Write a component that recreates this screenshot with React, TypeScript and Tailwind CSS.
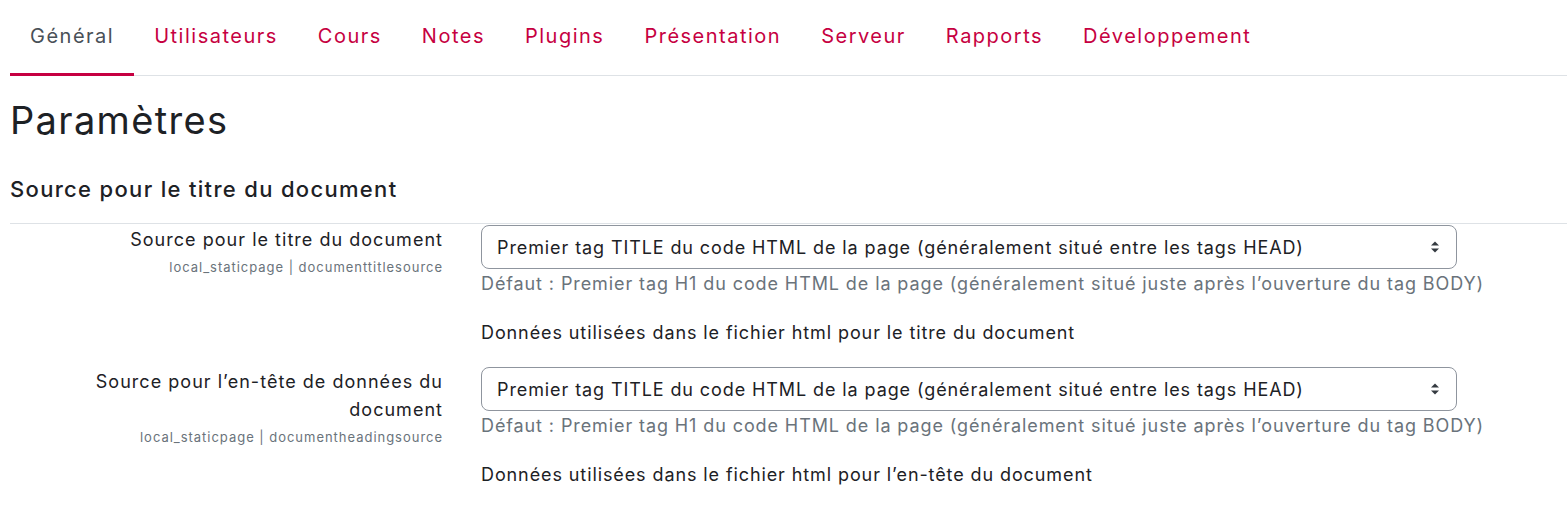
import React from "react";

const tabs = ["Général", "Utilisateurs", "Cours", "Notes", "Plugins", "Présentation", "Serveur", "Rapports", "Développement"];

function Arrow() {
  return (
    <svg width="10" height="14" viewBox="0 0 10 14" className="shrink-0">
      <path d="M5 1.5 L9 5.5 H1 Z" fill="#343a40" />
      <path d="M5 12.5 L9 8.5 H1 Z" fill="#343a40" />
    </svg>
  );
}

function Row({ label, sub, desc }: { label: React.ReactNode; sub: string; desc: string }) {
  return (
    <div className="flex h-[142px]">
      <div className="w-[433px] shrink-0 text-right">
        <div className="text-[18px] leading-[28px] tracking-[0.057em] text-[#1d2125] mt-[2px]">{label}</div>
        <div className="text-[13px] leading-[20px] tracking-[0.075em] text-[#6a737b] mt-[3px]">{sub}</div>
      </div>
      <div className="ml-[38px] w-[976px] pt-[1px]">
        <div className="h-[44px] rounded-[8px] border border-[#8f959e] flex items-center justify-between pl-[15px] pr-[16px] text-[18px] tracking-[0.05em] text-[#1d2125]">
          <span>Premier tag TITLE du code HTML de la page (généralement situé entre les tags HEAD)</span>
          <Arrow />
        </div>
        <div className="text-[18px] leading-[28px] tracking-[0.05em] text-[#6a737b] mt-[1px] whitespace-nowrap">
          Défaut : Premier tag H1 du code HTML de la page (généralement situé juste après l’ouverture du tag BODY)
        </div>
        <div className="text-[18px] leading-[28px] tracking-[0.05em] text-[#1d2125] mt-[21px]">{desc}</div>
      </div>
    </div>
  );
}

export default function App() {
  return (
    <div className="bg-white w-[1567px] h-[507px] overflow-hidden" style={{ fontFamily: "Inter, 'Liberation Sans', sans-serif" }}>
      <div className="pl-[10px]">
        <div className="flex h-[76px] border-b border-[#dee2e6]">
          {tabs.map((t, i) => (
            <div
              key={t}
              className={
                "px-[20px] h-[76px] flex items-center text-[20px] tracking-[0.075em] pb-[4px] " +
                (i === 0 ? "text-[#495057] border-b-[3px] border-[#c60041] mb-[-1px] pt-[3px]" : "text-[#c60041]")
              }
            >
              {t}
            </div>
          ))}
        </div>
        <h2 className="text-[38px] leading-[44px] tracking-[0.035em] text-[#1d2125] mt-[22px]">Paramètres</h2>
        <h3 className="text-[22px] leading-[30px] tracking-[0.06em] font-medium text-[#1d2125] mt-[32px]">Source pour le titre du document</h3>
        <div className="border-t border-[#dee2e6] mt-[19px]">
          <Row
            label="Source pour le titre du document"
            sub="local_staticpage | documenttitlesource"
            desc="Données utilisées dans le fichier html pour le titre du document"
          />
          <Row
            label={<>Source pour l’en-tête de données du<br />document</>}
            sub="local_staticpage | documentheadingsource"
            desc="Données utilisées dans le fichier html pour l’en-tête du document"
          />
        </div>
      </div>
    </div>
  );
}
